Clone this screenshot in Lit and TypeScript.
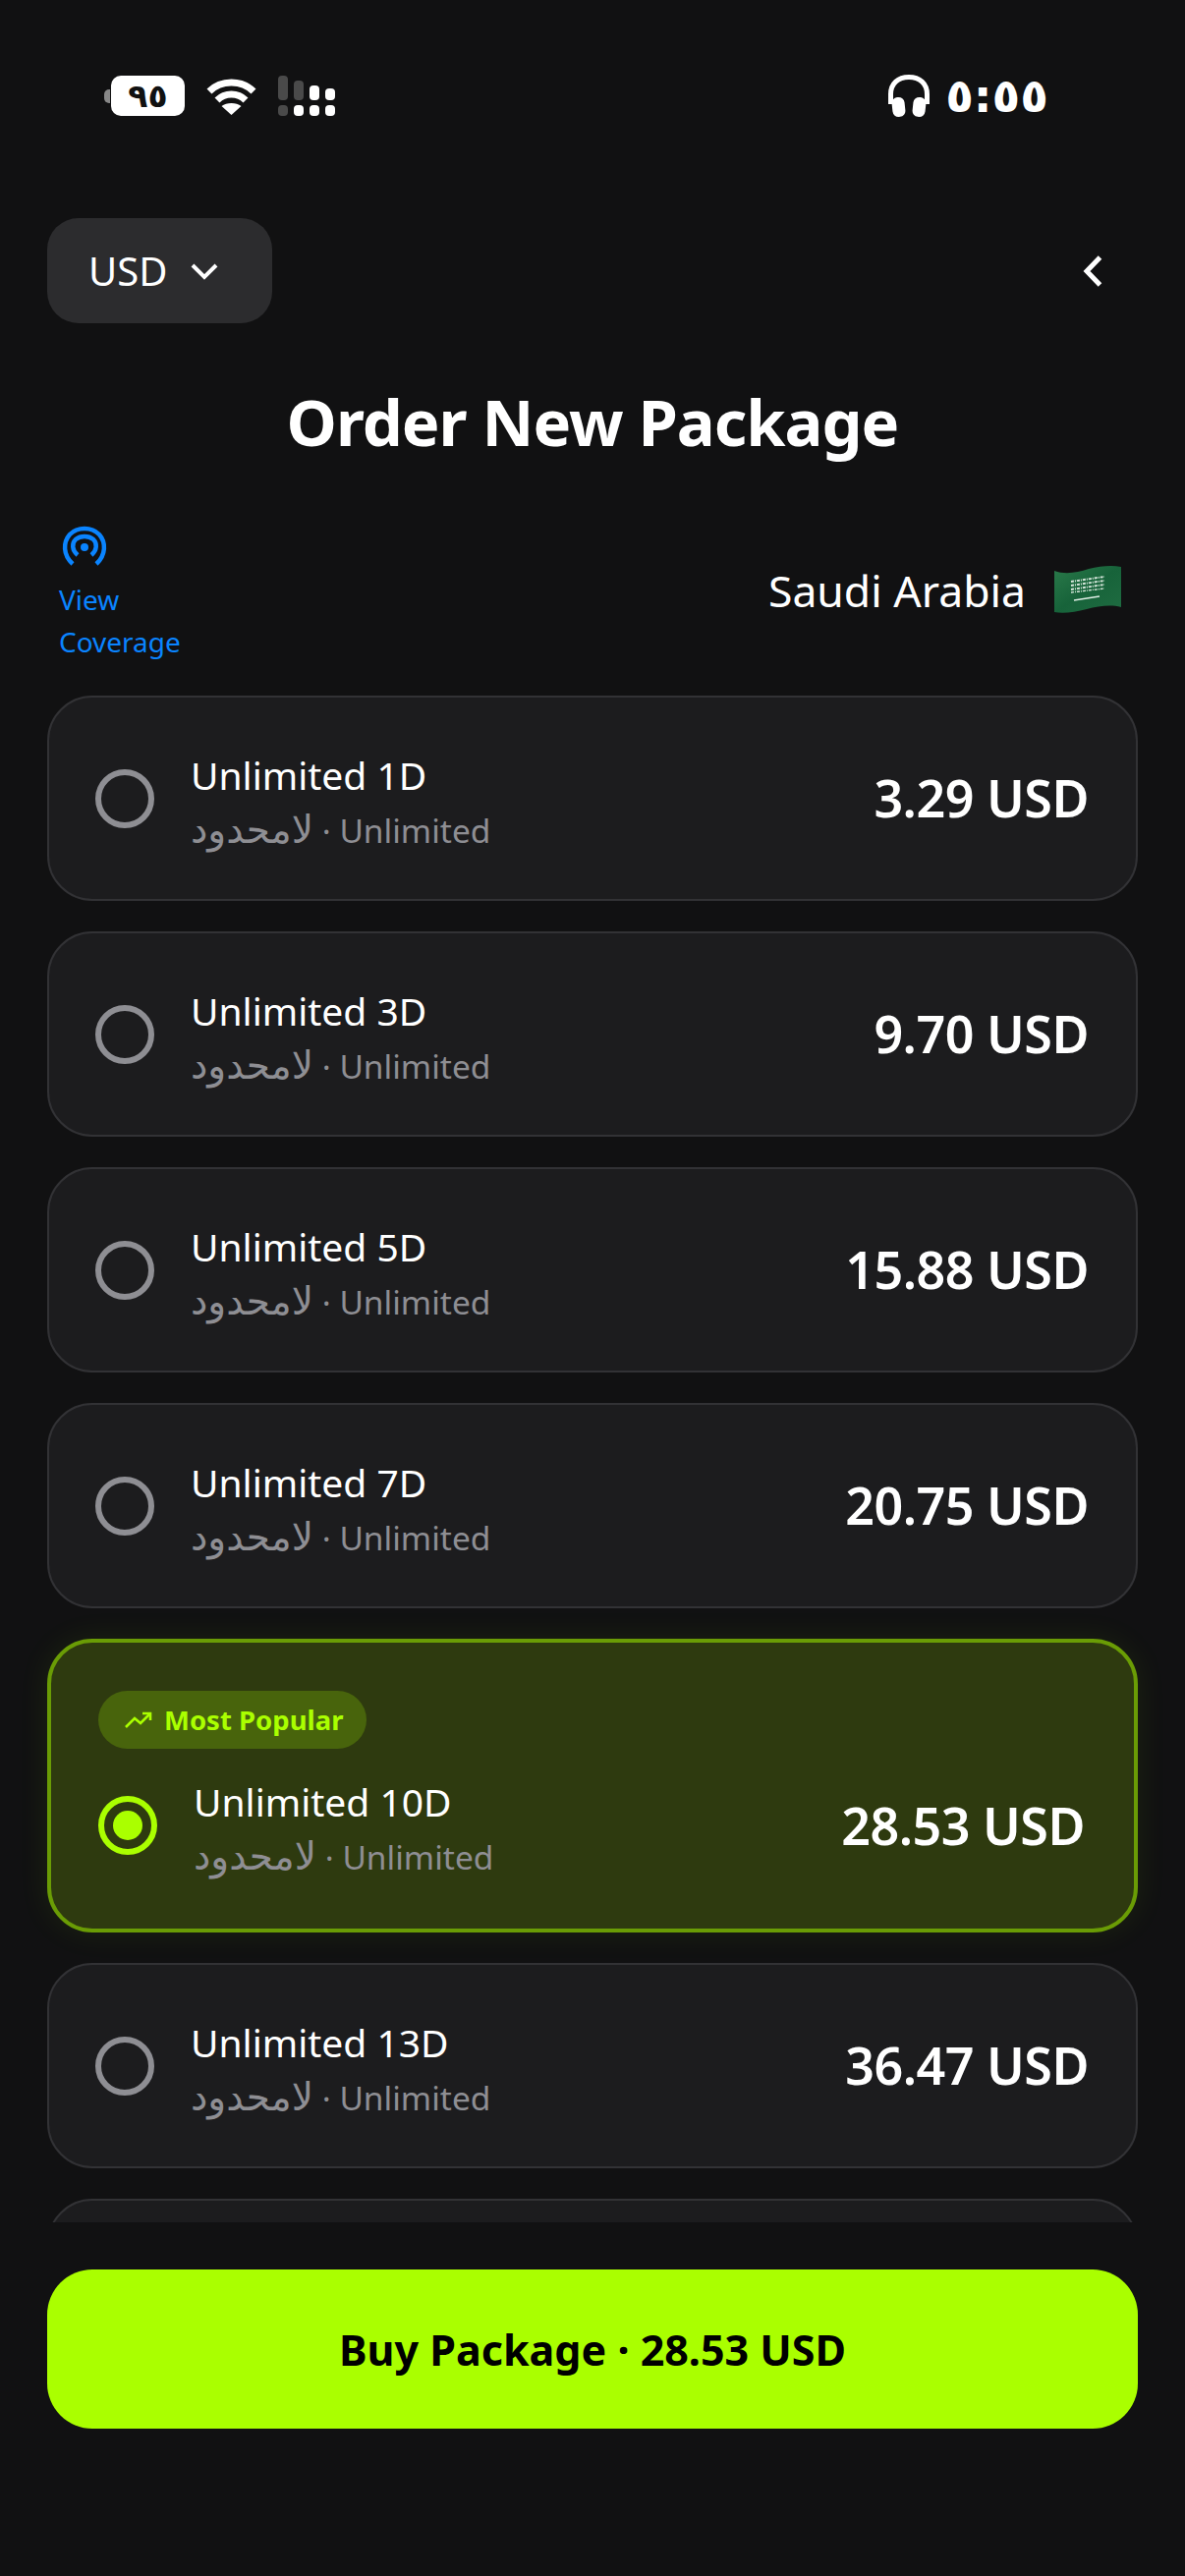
import { LitElement, html, css, svg } from "lit";
import { customElement } from "lit/decorators.js";
import { classMap } from "lit/directives/class-map.js";

type Plan = {
  name: string;
  price: string;
  popular?: boolean;
};

const plans: Plan[] = [
  { name: "Unlimited 1D", price: "3.29 USD" },
  { name: "Unlimited 3D", price: "9.70 USD" },
  { name: "Unlimited 5D", price: "15.88 USD" },
  { name: "Unlimited 7D", price: "20.75 USD" },
  { name: "Unlimited 10D", price: "28.53 USD", popular: true },
  { name: "Unlimited 13D", price: "36.47 USD" },
];

const wifiIcon = svg`<svg width="51" height="38" viewBox="0 0 51 38" fill="none" stroke="#fff" stroke-width="7">
  <path d="M3 14C15 2 36 2 48 14" />
  <path d="M11 23C19 15 32 15 40 23" />
  <path d="M25.5 38l-10-9c5-4 15-4 20 0z" fill="#fff" stroke="none" />
</svg>`;

const headphoneIcon = svg`<svg width="42" height="43" viewBox="0 0 42 43" fill="none">
  <path d="M2.5 30V20C2.5 9 10 2.5 21 2.5S39.5 9 39.5 20V30" stroke="#fff" stroke-width="5" />
  <rect x="4" y="23" width="13" height="20" rx="6" fill="#fff" transform="rotate(-6 10 33)" />
  <rect x="25" y="23" width="13" height="20" rx="6" fill="#fff" transform="rotate(6 32 33)" />
</svg>`;

const coverageIcon = svg`<svg width="46" height="42" viewBox="0 0 46 42" fill="none" stroke="#0a84ff" stroke-width="4.5">
  <path d="M11 39C1 30 1 17 8 9c8-8 22-8 30 0c7 8 7 21-3 30" />
  <path d="M16 30c-6-5-6-12-2-16c5-4 13-4 18 0c4 4 4 11-2 16" />
  <circle cx="23" cy="22" r="4" fill="#0a84ff" stroke="none" />
</svg>`;

const flagIcon = svg`<svg width="70" height="50" viewBox="0 0 70 50">
  <defs>
    <linearGradient id="flag" x1="0" x2="1" y1="0" y2="1">
      <stop offset="0" stop-color="#2a7a4a" />
      <stop offset="0.5" stop-color="#17633a" />
      <stop offset="1" stop-color="#1f6c41" />
    </linearGradient>
  </defs>
  <path d="M1 6C12 10 24 8 36 4C48 1 60 0 69 2V43C58 40 46 42 34 45C22 48 10 50 1 48Z" fill="url(#flag)" />
  <g fill="none" stroke="#d5e6da" stroke-width="2" stroke-dasharray="3 1 1 1">
    <path d="M18 17L52 12" />
    <path d="M18 21L52 16" />
    <path d="M18 25L52 20" />
    <path d="M18 28L52 24" stroke-width="1.4" />
  </g>
  <path d="M21 36L47 32" stroke="#dfeee5" stroke-width="1.3" />
</svg>`;

@customElement("app-root")
export class AppRoot extends LitElement {
  static styles = css`
    :host {
      display: block;
      width: 1206px;
      height: 2622px;
      background: #111112;
      color: #fff;
      font-family: "Noto Sans", "DejaVu Sans", sans-serif;
      overflow: hidden;
    }

    .status {
      height: 110px;
      padding: 85px 139px 0 105px;
      box-sizing: border-box;
      display: flex;
      justify-content: space-between;
      align-items: center;
    }

    .status-left,
    .status-right {
      display: flex;
      align-items: center;
    }

    .battery {
      width: 75px;
      height: 41px;
      border-radius: 10px;
      background: #fff;
      color: #111;
      font: 700 33px "DejaVu Sans", sans-serif;
      display: flex;
      align-items: center;
      justify-content: center;
      line-height: 1;
      margin-left: 8px;
      position: relative;
    }

    .battery::before {
      content: "";
      position: absolute;
      left: -7px;
      top: 14px;
      width: 6px;
      height: 14px;
      border-radius: 5px 0 0 5px;
      background: #888;
    }

    .status-left svg {
      margin-left: 22px;
    }

    .signal {
      display: grid;
      grid-template-columns: repeat(4, 10px);
      grid-template-rows: 25px 11px;
      column-gap: 6px;
      row-gap: 5px;
      margin-left: 22px;
    }

    .signal i {
      background: #fff;
      border-radius: 4px;
      align-self: end;
      height: 11px;
    }

    .signal i.dim {
      background: #4a4a4a;
    }

    .time {
      font: 700 47px "DejaVu Sans", sans-serif;
      margin-left: 16px;
      line-height: 1;
    }

    .nav {
      margin-top: 112px;
      padding: 0 48px;
      display: flex;
      align-items: center;
      justify-content: space-between;
    }

    .currency {
      width: 229px;
      height: 107px;
      box-sizing: border-box;
      padding-left: 42px;
      border-radius: 32px;
      background: #2c2c2e;
      display: flex;
      align-items: center;
      gap: 24px;
      font-size: 40px;
    }

    .back {
      margin-right: 33px;
      display: flex;
    }

    h1 {
      margin: 55px 0 0;
      font-size: 65px;
      line-height: 90px;
      font-weight: 700;
      text-align: center;
      letter-spacing: -1px;
    }

    .region {
      margin-top: 61px;
      padding: 0 64px 0 60px;
      display: flex;
      align-items: center;
      justify-content: space-between;
    }

    .coverage {
      color: #0a84ff;
      font-size: 28px;
      line-height: 43px;
      display: flex;
      flex-direction: column;
      align-items: flex-start;
    }

    .coverage svg {
      margin: 0 0 12px 3px;
    }

    .country {
      display: flex;
      align-items: center;
      gap: 28px;
      font-size: 44.5px;
      margin-bottom: 10px;
    }

    .list {
      margin-top: 33px;
      padding: 0 48px;
      height: 1554px;
      overflow: hidden;
      display: flex;
      flex-direction: column;
      gap: 31px;
    }

    .card {
      flex: none;
      box-sizing: border-box;
      height: 209px;
      padding: 0 48px 0 47px;
      background: #1c1c1e;
      border: 2px solid #323235;
      border-radius: 46px;
      display: flex;
      flex-direction: column;
      justify-content: center;
    }

    .card.popular {
      height: 299px;
      padding: 49px 50px 0 48px;
      background: #2e3a0f;
      border: 4px solid #6a9c05;
      box-shadow: 0 0 32px rgba(170, 255, 0, 0.08);
      justify-content: flex-start;
    }

    .badge {
      align-self: flex-start;
      height: 59px;
      box-sizing: border-box;
      padding: 0 23px 0 27px;
      border-radius: 30px;
      background: #48640c;
      color: #aaff00;
      font-size: 27.5px;
      font-weight: 700;
      display: flex;
      align-items: center;
      gap: 12px;
      margin-bottom: 20px;
    }

    .row {
      display: flex;
      align-items: center;
    }

    .radio {
      flex: none;
      box-sizing: border-box;
      width: 60px;
      height: 60px;
      border-radius: 50%;
      border: 6px solid #8e8e93;
      display: flex;
      align-items: center;
      justify-content: center;
      margin-right: 37px;
    }

    .popular .radio {
      border-color: #aaff00;
    }

    .popular .radio::after {
      content: "";
      width: 30px;
      height: 30px;
      border-radius: 50%;
      background: #aaff00;
    }

    .text {
      flex: 1;
      padding-top: 8px;
    }

    .name {
      font-size: 39px;
      line-height: 52px;
    }

    .sub {
      font-size: 33.5px;
      line-height: 52px;
      margin-top: 2px;
      color: #8e8e93;
    }

    .ar {
      font-size: 39px;
    }

    .price {
      font-size: 52px;
      font-weight: 600;
      letter-spacing: -0.5px;
      padding-bottom: 2px;
    }

    .footer {
      padding: 48px 48px 0;
    }

    .buy {
      height: 162px;
      border-radius: 46px;
      background: #aaff00;
      color: #000;
      font-size: 43px;
      font-weight: 700;
      display: flex;
      align-items: center;
      justify-content: center;
    }
  `;

  renderPlan(plan: Plan) {
    return html`
      <div class=${classMap({ card: true, popular: !!plan.popular })}>
        ${plan.popular
          ? html`<div class="badge">
              <svg width="28" height="18" viewBox="0 0 28 18" fill="none" stroke="#aaff00" stroke-width="2.6">
                <path d="M1 16L10 7l6 5L26 2" />
                <path d="M18 2h8v7" />
              </svg>
              Most Popular
            </div>`
          : ""}
        <div class="row">
          <div class="radio"></div>
          <div class="text">
            <div class="name">${plan.name}</div>
            <div class="sub"><span class="ar">لامحدود</span> · Unlimited</div>
          </div>
          <div class="price">${plan.price}</div>
        </div>
      </div>
    `;
  }

  render() {
    return html`
      <div class="status">
        <div class="status-left">
          <div class="battery">٩٥</div>
          ${wifiIcon}
          <div class="signal">
            <i class="dim" style="height:25px"></i>
            <i class="dim" style="height:20px"></i>
            <i style="height:15px"></i>
            <i style="height:12px"></i>
            <i class="dim"></i>
            <i></i>
            <i></i>
            <i></i>
          </div>
        </div>
        <div class="status-right">
          ${headphoneIcon}
          <div class="time">٥:٥٥</div>
        </div>
      </div>

      <div class="nav">
        <div class="currency">
          USD
          <svg width="28" height="18" viewBox="0 0 28 18" fill="none" stroke="#fff" stroke-width="4">
            <path d="M2 3l12 12L26 3" />
          </svg>
        </div>
        <div class="back">
          <svg width="24" height="38" viewBox="0 0 24 38" fill="none" stroke="#fff" stroke-width="5">
            <path d="M18.5 5L5 19l13.5 14" />
          </svg>
        </div>
      </div>

      <h1>Order New Package</h1>

      <div class="region">
        <div class="coverage">
          ${coverageIcon}
          <span>View</span>
          <span>Coverage</span>
        </div>
        <div class="country">Saudi Arabia ${flagIcon}</div>
      </div>

      <div class="list">
        ${plans.map((p) => this.renderPlan(p))}
        <!-- next row peeks in under the fold, its text is not visible -->
        <div class="card"></div>
      </div>

      <div class="footer">
        <div class="buy">Buy Package · 28.53 USD</div>
      </div>
    `;
  }
}
